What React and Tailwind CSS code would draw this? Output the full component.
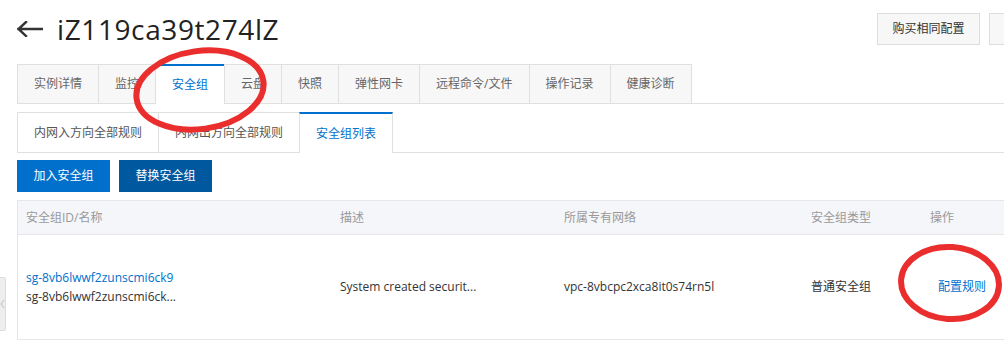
import React from "react";

const font = { fontFamily: '"Open Sans","Noto Sans CJK SC",sans-serif' };

function Tab({ label, active, last }) {
  return (
    <div
      className={
        "flex items-center px-4 text-[12px] border-l border-[#e0e0e0] " +
        (last ? "border-r " : "") +
        (active
          ? "bg-white text-[#0070cc] border-t-2 border-t-[#0070cc] h-[40px] -mb-px relative"
          : "bg-[#f7f7f7] text-[#666] border-t h-[39px]")
      }
    >
      {label}
    </div>
  );
}

export default function App() {
  const tabs = ["实例详情", "监控", "安全组", "云盘", "快照", "弹性网卡", "远程命令/文件", "操作记录", "健康诊断"];
  const subTabs = ["内网入方向全部规则", "内网出方向全部规则", "安全组列表"];
  return (
    <div className="relative w-[1004px] h-[358px] overflow-hidden bg-white" style={font}>
      <div className="w-[1100px] pl-[17px] pt-[13px]">
        {/* title row */}
        <div className="flex items-center h-[32px]">
          <div className="flex-1 flex items-center">
            <svg width="26" height="16" viewBox="0 0 26 16" className="mr-[14px]">
              <path d="M1.5 8 H25.5 M9 1 L1.5 8 L9 15" fill="none" stroke="#333" strokeWidth="2.4" strokeLinecap="square" />
            </svg>
            <span className="text-[28px] leading-[32px] text-[#222] tracking-[0.6px]">iZ119ca39t274lZ</span>
          </div>
          <div className="flex gap-[9px]">
            <div className="w-[103px] h-[32px] flex items-center justify-center border border-[#ddd] bg-[#f7f7f7] text-[12px] text-[#333]">
              购买相同配置
            </div>
            <div className="w-[111px] h-[32px] border border-[#ddd] bg-[#f7f7f7]" />
          </div>
        </div>

        {/* main tabs */}
        <div className="mt-[19px] flex items-end border-b border-[#e0e0e0]">
          {tabs.map((t, i) => (
            <Tab key={t} label={t} active={t === "安全组"} last={i === tabs.length - 1} />
          ))}
        </div>

        {/* sub tabs */}
        <div className="mt-[8px] flex items-end border-b border-[#e0e0e0]">
          {subTabs.map((t, i) => (
            <div
              key={t}
              className={
                "flex items-center px-4 text-[12px] border-l border-[#e0e0e0] " +
                (i === subTabs.length - 1 ? "border-r " : "") +
                (t === "安全组列表"
                  ? "bg-white text-[#0070cc] border-t-2 border-t-[#0070cc] h-[41px] -mb-px relative"
                  : "bg-white text-[#555] border-t h-[40px]")
              }
            >
              {t}
            </div>
          ))}
        </div>

        {/* action buttons */}
        <div className="mt-[7px] flex gap-[9px]">
          <div className="h-[32px] w-[93px] flex items-center justify-center bg-[#0070cc] text-white text-[12px]">加入安全组</div>
          <div className="h-[32px] w-[93px] flex items-center justify-center bg-[#00589f] text-white text-[12px]">替换安全组</div>
        </div>

        {/* table */}
        <div className="mt-[8px] border-l border-t border-[#e6e6e6]">
          <div className="grid grid-cols-[313px_224px_247px_119px_200px] h-[34px] bg-[#f5f6fa] border-b border-[#e6e6e6] text-[12px] text-[#999] items-center">
            <div className="pl-[8px]">安全组ID/名称</div>
            <div className="pl-[9px]">描述</div>
            <div className="pl-[9px]">所属专有网络</div>
            <div className="pl-[9px]">安全组类型</div>
            <div className="pl-[9px]">操作</div>
          </div>
          <div className="grid grid-cols-[313px_224px_247px_119px_200px] h-[105px] border-b border-[#e6e6e6] text-[12px] text-[#333] items-center">
            <div className="pl-[8px] leading-[19px]">
              <div className="text-[#0070cc]">sg-8vb6lwwf2zunscmi6ck9</div>
              <div>sg-8vb6lwwf2zunscmi6ck...</div>
            </div>
            <div className="pl-[9px]">System created securit...</div>
            <div className="pl-[9px]">vpc-8vbcpc2xca8it0s74rn5l</div>
            <div className="pl-[9px]">普通安全组</div>
            <div className="pl-[17px] text-[#0070cc]">配置规则</div>
          </div>
        </div>
      </div>

      {/* collapsed sidebar handle */}
      <div className="absolute left-0 top-[277px] w-[6px] h-[54px] bg-[#eeeeee] border border-l-0 border-[#dcdcdc] rounded-r-[2px] flex items-center">
        <svg width="5" height="10" viewBox="0 0 5 10">
          <path d="M4 1 L1 5 L4 9" fill="none" stroke="#bbb" strokeWidth="1" />
        </svg>
      </div>

      {/* red annotation ellipses */}
      <svg className="absolute inset-0 pointer-events-none" width="1004" height="358">
        <ellipse cx="200" cy="90" rx="64" ry="39" transform="rotate(-8 200 90)" fill="none" stroke="#ea2e2e" strokeWidth="6" />
        <ellipse cx="950" cy="283" rx="49" ry="36" transform="rotate(4 950 283)" fill="none" stroke="#ea2e2e" strokeWidth="6" />
      </svg>
    </div>
  );
}
